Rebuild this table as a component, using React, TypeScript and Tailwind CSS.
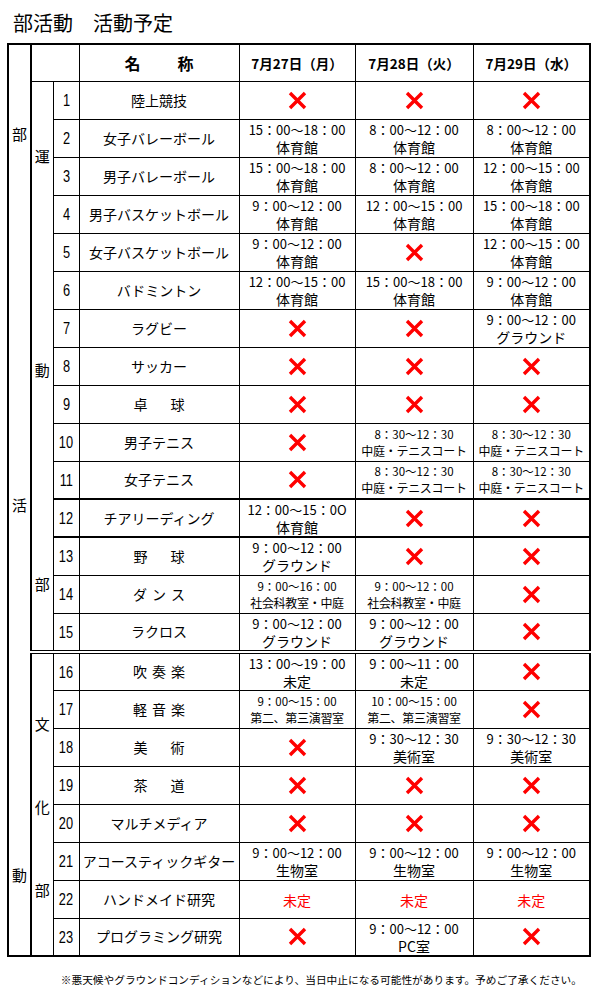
type Cell = 'x' | 'tbd' | { t: string; p: string; sm?: boolean }

const X: Cell = 'x'
const TBD: Cell = 'tbd'
const g = (t: string, p: string, sm = false): Cell => ({ t, p, sm })

const gym = '体育館'
const ground = 'グラウンド'
const tennis = '中庭・テニスコート'
const practice = '第二、第三演習室'

const rows: { no: number; name: string; cells: Cell[] }[] = [
  { no: 1, name: '陸上競技', cells: [X, X, X] },
  { no: 2, name: '女子バレーボール', cells: [g('15：00～18：00', gym), g('8：00～12：00', gym), g('8：00～12：00', gym)] },
  { no: 3, name: '男子バレーボール', cells: [g('15：00～18：00', gym), g('8：00～12：00', gym), g('12：00～15：00', gym)] },
  { no: 4, name: '男子バスケットボール', cells: [g('9：00～12：00', gym), g('12：00～15：00', gym), g('15：00～18：00', gym)] },
  { no: 5, name: '女子バスケットボール', cells: [g('9：00～12：00', gym), X, g('12：00～15：00', gym)] },
  { no: 6, name: 'バドミントン', cells: [g('12：00～15：00', gym), g('15：00～18：00', gym), g('9：00～12：00', gym)] },
  { no: 7, name: 'ラグビー', cells: [X, X, g('9：00～12：00', ground)] },
  { no: 8, name: 'サッカー', cells: [X, X, X] },
  { no: 9, name: '卓　球', cells: [X, X, X] },
  { no: 10, name: '男子テニス', cells: [X, g('8：30～12：30', tennis, true), g('8：30～12：30', tennis, true)] },
  { no: 11, name: '女子テニス', cells: [X, g('8：30～12：30', tennis, true), g('8：30～12：30', tennis, true)] },
  { no: 12, name: 'チアリーディング', cells: [g('12：00～15：0O', gym), X, X] },
  { no: 13, name: '野　球', cells: [g('9：00～12：00', ground), X, X] },
  { no: 14, name: 'ダ ン ス', cells: [g('9：00～16：00', '社会科教室・中庭', true), g('9：00～12：00', '社会科教室・中庭', true), X] },
  { no: 15, name: 'ラクロス', cells: [g('9：00～12：00', ground), g('9：00～12：00', ground), X] },
  { no: 16, name: '吹 奏 楽', cells: [g('13：00～19：00', '未定'), g('9：00～11：00', '未定'), X] },
  { no: 17, name: '軽 音 楽', cells: [g('9：00～15：00', practice, true), g('10：00～15：00', practice, true), X] },
  { no: 18, name: '美　術', cells: [X, g('9：30～12：30', '美術室'), g('9：30～12：30', '美術室')] },
  { no: 19, name: '茶　道', cells: [X, X, X] },
  { no: 20, name: 'マルチメディア', cells: [X, X, X] },
  { no: 21, name: 'アコースティックギター', cells: [g('9：00～12：00', '生物室'), g('9：00～12：00', '生物室'), g('9：00～12：00', '生物室')] },
  { no: 22, name: 'ハンドメイド研究', cells: [TBD, TBD, TBD] },
  { no: 23, name: 'プログラミング研究', cells: [X, g('9：00～12：00', 'PC室'), X] },
]

function Cross() {
  return (
    <svg width="19" height="19" viewBox="0 0 19 19" className="mx-auto block">
      <path d="M2 2 L17 17 M17 2 L2 17" stroke="#ff0000" strokeWidth="3.4" />
    </svg>
  )
}

function ScheduleCell({ cell }: { cell: Cell }) {
  if (cell === 'x') return <Cross />
  if (cell === 'tbd') return <span className="text-[14px] text-[#ff0000]">未定</span>

  if (cell.sm) {
    return (
      <div className="pt-[1px]">
        <div className="text-[11.5px] leading-[15px]">{cell.t}</div>
        <div className="text-[12px] leading-[17px] tracking-[-0.3px]">{cell.p}</div>
      </div>
    )
  }

  return (
    <div className="pt-[2px]">
      <div className="text-[13px] leading-[16px]">{cell.t}</div>
      <div className="text-[14px] leading-[18px]">{cell.p}</div>
    </div>
  )
}

function Name({ name }: { name: string }) {
  // spaced names: full-width space = wide gap, half-width = narrow gap
  if (name.includes('　')) {
    return (
      <div className="flex justify-center gap-[23px]">
        {name.split('　').map((c) => (
          <span key={c}>{c}</span>
        ))}
      </div>
    )
  }
  if (name.includes(' ')) {
    return (
      <div className="flex justify-center gap-[5px]">
        {name.split(' ').map((c) => (
          <span key={c}>{c}</span>
        ))}
      </div>
    )
  }
  return <span>{name}</span>
}

function VerticalLabel({ chars, className }: { chars: string[]; className: string }) {
  return (
    <div className={`flex flex-col items-center justify-between text-[15px] leading-[15px] ${className}`}>
      {chars.map((c, i) => (
        <span key={i}>{c}</span>
      ))}
    </div>
  )
}

export default function App() {
  return (
    <div className="w-[592px] h-[1000px] bg-white text-black font-['Noto_Sans_CJK_JP','Noto_Sans',sans-serif]">
      {/* Title */}
      <div className="h-[43px] pl-[13px] pt-[10px] text-[20px] leading-[26px]">部活動　活動予定</div>

      <table className="ml-[7px] w-[582px] table-fixed border-collapse border-2 border-black">
        <colgroup>
          <col className="w-[23px]" />
          <col className="w-[22px]" />
          <col className="w-[26px]" />
          <col className="w-[160px]" />
          <col className="w-[116px]" />
          <col className="w-[118px]" />
          <col className="w-[117px]" />
        </colgroup>
        <tbody>
          <tr className="h-[37px]">
            <td rowSpan={24} className="border-2 border-black p-0 align-top">
              <VerticalLabel chars={['部', '活', '動']} className="h-[837px] pt-[81px]" />
            </td>
            <td colSpan={2} className="border border-black p-0" />
            <td className="border border-black p-0">
              <div className="flex justify-center gap-[37px] text-[16px] font-bold">
                <span>名</span>
                <span>称</span>
              </div>
            </td>
            {['7月27日（月）', '7月28日（火）', '7月29日（水）'].map((d) => (
              <td key={d} className="border border-black p-0 text-center text-[13.5px] font-bold">
                {d}
              </td>
            ))}
          </tr>

          {rows.map((r) => {
            const thick = r.no === 12 ? 'border-y-2' : ''
            const dbl = r.no === 16 ? 'border-double border-t-[4px]' : ''
            const edge = `border border-black p-0 text-center ${thick} ${dbl}`
            return (
              <tr key={r.no} className="h-[38px]">
                {r.no === 1 && (
                  <td rowSpan={15} className="border border-black p-0 align-top">
                    <VerticalLabel chars={['運', '動', '部']} className="h-[509px] pt-[66px]" />
                  </td>
                )}
                {r.no === 16 && (
                  <td rowSpan={8} className="border border-double border-t-[4px] border-black p-0 align-top">
                    <VerticalLabel chars={['文', '化', '部']} className="h-[243px] pt-[62px]" />
                  </td>
                )}
                <td className={edge}>
                  <span className="inline-block scale-x-[0.8] font-['Liberation_Sans',sans-serif] text-[16px]">
                    {r.no}
                  </span>
                </td>
                <td className={`${edge} text-[14px]`}>
                  <Name name={r.name} />
                </td>
                {r.cells.map((c, i) => (
                  <td key={i} className={edge}>
                    <ScheduleCell cell={c} />
                  </td>
                ))}
              </tr>
            )
          })}
        </tbody>
      </table>

      {/* Footnote */}
      <div className="mt-[14px] pr-[10px] text-right text-[10.7px] leading-[18px]">
        ※悪天候やグラウンドコンディションなどにより、当日中止になる可能性があります。予めご了承ください。
      </div>
    </div>
  )
}
